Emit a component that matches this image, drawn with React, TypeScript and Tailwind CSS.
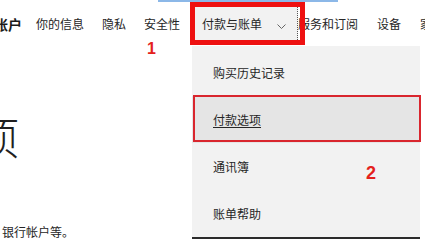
import React from "react";

const NAV_BEFORE = ["你的信息", "隐私", "安全性"];
const NAV_AFTER = ["服务和订阅", "设备", "家庭"];
const MENU = ["购买历史记录", "付款选项", "通讯簿", "账单帮助"];

function Chevron() {
  return (
    <svg width="9" height="5" viewBox="0 0 9 5" className="mt-[4px]">
      <path d="M0.5 0.5 L4.5 4.5 L8.5 0.5" fill="none" stroke="#666" strokeWidth="1" />
    </svg>
  );
}

export default function App() {
  return (
    <div
      className="relative h-[243px] w-[425px] overflow-hidden bg-white text-[#262626]"
      style={{ fontFamily: '"Noto Sans CJK SC", "Noto Sans", sans-serif' }}
    >
      {/* top accent */}
      <div className="absolute left-[158px] top-0 h-[2px] w-[180px] bg-[#8cb8e8]" />

      {/* Nav row */}
      <nav className="flex h-[48px] items-center whitespace-nowrap">
        <span className="ml-[-6px] mr-[14px] text-[14px] font-bold text-[#1a1a1a]">帐户</span>
        <div className="flex items-center gap-[18px] text-[12px]">
          {NAV_BEFORE.map((n) => (
            <span key={n}>{n}</span>
          ))}
        </div>
        <button className="ml-[10px] flex h-[40px] items-center gap-[15px] border-r border-dotted border-[#555] bg-[#f2f2f2] pl-[12px] pr-[11px] text-[12px] text-[#262626]">
          <span>付款与账单</span>
          <Chevron />
        </button>
        <div className="flex items-center gap-[19px] text-[12px]">
          {NAV_AFTER.map((n) => (
            <span key={n}>{n}</span>
          ))}
        </div>
      </nav>

      {/* Page content */}
      <main>
        <h1 className="ml-[-157px] mt-[66px] text-[44px] font-light leading-none text-[#1f1f1f]">付款选项</h1>
        <p className="ml-[2px] mt-[68px] text-[12px] leading-none text-[#262626]">银行帐户等。</p>
      </main>

      {/* Dropdown menu */}
      <div className="absolute left-[192px] top-[46px] w-[228px] border-b-2 border-[#2b2b2b] bg-[#f2f2f2] pt-[3px]">
        {MENU.map((m, i) => (
          <div
            key={m}
            className={`flex h-[47px] items-center pl-[21px] text-[12px] text-[#262626] ${
              i === 1 ? "bg-[#e5e5e5] underline underline-offset-2" : ""
            }`}
          >
            {m}
          </div>
        ))}
      </div>

      {/* Annotations */}
      <div className="absolute left-[190px] top-[2px] h-[43px] w-[115px] border-[5px] border-[#ee1111]" />
      <div className="absolute left-[193px] top-[95px] h-[47px] w-[228px] border-2 border-[#d9262e]" />
      <span className="absolute left-[147px] top-[41px] text-[16px] font-bold leading-none text-[#e4211c]" style={{ fontFamily: '"Liberation Sans", sans-serif' }}>
        1
      </span>
      <span className="absolute left-[366px] top-[164px] text-[18px] font-bold leading-none text-[#e4211c]" style={{ fontFamily: '"Liberation Sans", sans-serif' }}>
        2
      </span>
    </div>
  );
}
